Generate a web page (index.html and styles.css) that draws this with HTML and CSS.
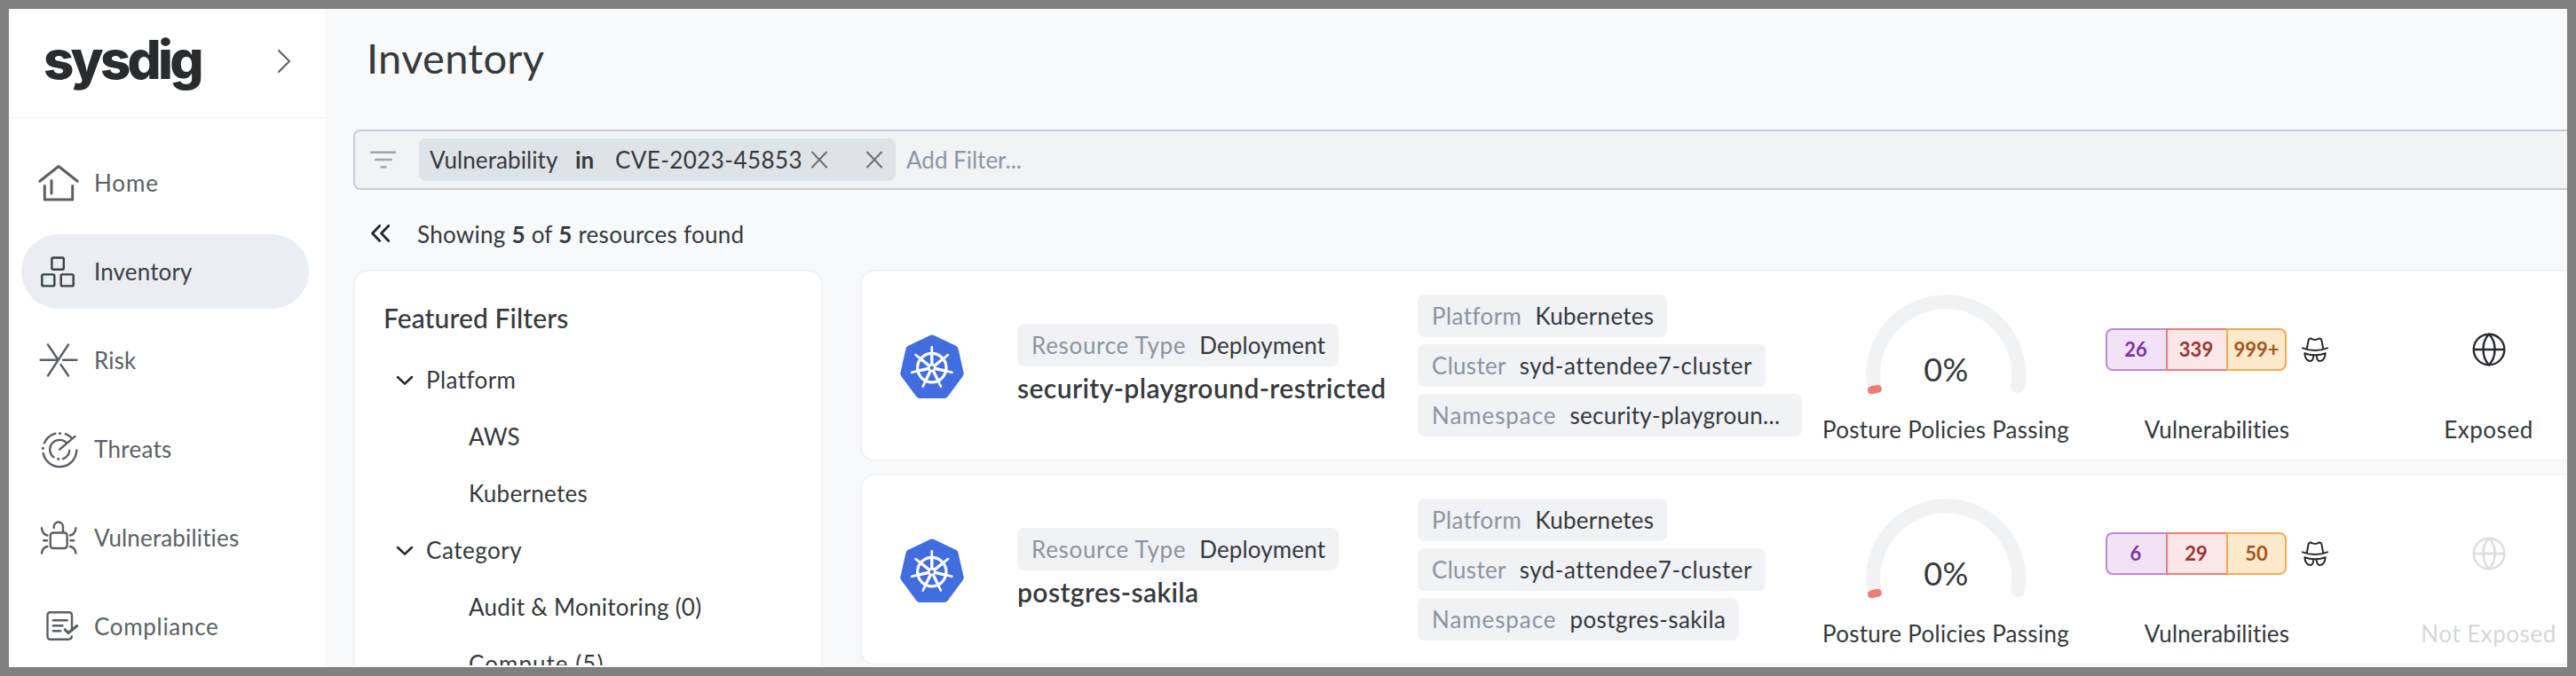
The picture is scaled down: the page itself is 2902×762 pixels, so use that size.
FILE: index.html
```html
<!DOCTYPE html>
<html lang="en">
<head>
<meta charset="utf-8">
<title>Inventory</title>
<link rel="stylesheet" href="styles.css">
</head>
<body>
<svg class="defs" width="0" height="0" aria-hidden="true">
  <symbol id="k8s" viewBox="0 0 72 72">
    <path d="M36 5.5 11.4 17.2 5.3 44 22.3 67H49.7L66.7 44 60.6 17.2Z" fill="#416ddf" stroke="#416ddf" stroke-width="10" stroke-linejoin="round"/>
    <g transform="translate(35.8 37.6)" stroke="#fff" stroke-width="2.7" stroke-linecap="round" fill="none">
      <circle r="16.2" stroke-width="3.2"/>
      <g id="spoke"><path d="M0-15V-23.2"/><path d="M0-4V-15" stroke-width="3.4"/></g>
      <use href="#spoke" transform="rotate(51.43)"/>
      <use href="#spoke" transform="rotate(102.86)"/>
      <use href="#spoke" transform="rotate(154.29)"/>
      <use href="#spoke" transform="rotate(205.71)"/>
      <use href="#spoke" transform="rotate(257.14)"/>
      <use href="#spoke" transform="rotate(308.57)"/>
      <circle r="4.6" fill="#fff" stroke="none"/>
      <circle r="2.2" fill="#416ddf" stroke="none"/>
    </g>
  </symbol>
  <symbol id="gauge" viewBox="0 0 276 135">
    <path d="M57.2 103A82 82 0 1 1 219.2 103" fill="none" stroke="#f1f2f4" stroke-width="16"/>
    <circle cx="219.1" cy="103" r="8" fill="#f1f2f4"/>
    <rect x="49.9" y="102.5" width="16" height="9" rx="4.2" fill="#ee7d78" transform="rotate(-12 57.9 107)"/>
  </symbol>
  <symbol id="spy" viewBox="0 0 30 28">
    <g fill="none" stroke="#26292d" stroke-width="2" stroke-linecap="round" stroke-linejoin="round">
      <path d="M1 12.4Q15 17.6 29 12.4"/>
      <path d="M5.8 13 7.6 3.6Q8.2 1.3 10 1.5L13 2.6Q15 3.2 17 2.6L20 1.5Q21.8 1.3 22.4 3.6L24.2 13"/>
      <path d="M3.3 18.2Q9 20.2 13.2 20.2Q13.4 26.8 9.4 26.9Q4 26.9 3.3 18.2Z"/>
      <path d="M26.7 18.2Q21 20.2 16.8 20.2Q16.6 26.8 20.6 26.9Q26 26.9 26.7 18.2Z"/>
      <path d="M13 20.2H17"/>
    </g>
  </symbol>
  <symbol id="globe" viewBox="0 0 38 38">
    <g fill="none" stroke="currentColor" stroke-width="2.4" stroke-linejoin="round">
      <circle cx="19" cy="19" r="17.3"/>
      <path d="M1.7 19H36.3M19 1.7C10.3 10.5 10.3 27.5 19 36.3C27.7 27.5 27.7 10.5 19 1.7Z"/>
    </g>
  </symbol>
  <symbol id="chevron" viewBox="0 0 20 12">
    <path d="M2 2 10 9.6 18 2" fill="none" stroke="#222529" stroke-width="2.5" stroke-linecap="round" stroke-linejoin="round"/>
  </symbol>
  <symbol id="cross" viewBox="0 0 18 20">
    <path d="M1 1.5 17 18.5M17 1.5 1 18.5" stroke="#6b7079" stroke-width="2" stroke-linecap="round"/>
  </symbol>
</svg>

<div class="app">
  <aside class="sidebar">
    <header class="brand">
      <span class="logo">sysdig</span>
      <svg class="expand" viewBox="0 0 14 28"><path d="M1 2 13 14 1 26" fill="none" stroke="#5b5f66" stroke-width="2" stroke-linecap="round" stroke-linejoin="round"/></svg>
    </header>
    <nav class="nav">
      <a class="nav-item">
        <svg viewBox="0 0 56 56" stroke-width="3"><path d="M4.8 26.3 26 9.5 47.3 26.3M10.3 31.5V47H41.7V31.5M18 25.5V40"/></svg>
        <span class="ls-9">Home</span>
      </a>
      <a class="nav-item active">
        <svg viewBox="0 0 56 56" stroke-width="2.4"><rect x="18.4" y="12.5" width="13.4" height="13.2" rx="1.5"/><rect x="7.3" y="31.4" width="14" height="13" rx="1.5"/><rect x="28.7" y="31.4" width="14" height="13" rx="1.5"/></svg>
        <span class="ls-1">Inventory</span>
      </a>
      <a class="nav-item">
        <svg viewBox="0 0 56 56" stroke-width="2.4"><path d="M5.7 27.7H25.5M31 27.7H46.5M37 10.5 14 45.5M14 10.5 25.5 27.5M28.5 33 37 45.5"/></svg>
        <span class="ls-1">Risk</span>
      </a>
      <a class="nav-item">
        <svg viewBox="0 0 56 56" stroke-width="2.4"><path d="M46.3 29.5A19 19 0 0 1 8.7 33M9.8 21.6A19 19 0 0 1 22.4 10.6M33.8 11.1A19 19 0 0 1 41.2 16M44.5 13.9 27.2 28.7M20.3 37.3A10.9 10.9 0 1 1 35.3 21.6M31 39.2A10.9 10.9 0 0 0 38.2 30"/><path d="M8.3 27.3h.01M27.5 10.5h.01M25.7 39.3h.01" stroke-width="3.2"/></svg>
        <span class="ls-3">Threats</span>
      </a>
      <a class="nav-item">
        <svg viewBox="0 0 56 56" stroke-width="2.4"><rect x="16.8" y="22.5" width="18.8" height="17.5" rx="3"/><path d="M20.7 17V15.7A5.15 5.15 0 0 1 31 15.7V22M7 17.3C7.5 21.5 10 24.8 13.4 25.5M45.4 17.3C44.9 21.5 42.4 24.8 39 25.5M9.2 31.3H13M39.4 31.3H43.2M13.4 38C10 38.7 7.5 41.5 7 45.5M39 38C42.4 38.7 44.9 41.5 45.4 45.5"/></svg>
        <span class="ls-1">Vulnerabilities</span>
      </a>
      <a class="nav-item">
        <svg viewBox="0 0 56 56" stroke-width="2.4"><path d="M41 30V15.3A3 3 0 0 0 38 12.3H16.5A3 3 0 0 0 13.5 15.3V39.7A3 3 0 0 0 16.5 42.7H37Q40.5 42.7 40.8 39.5M19.8 21.3H35.7M19.8 27.3H30.5M19.8 33.3H28.3"/><path d="M33.2 31.8 37 35.4 46.7 27.6" stroke-width="3.2"/></svg>
        <span class="ls-7">Compliance</span>
      </a>
    </nav>
  </aside>

  <main class="main">
    <h1 class="title">Inventory</h1>
    <div class="search">
      <svg class="filter-icon" viewBox="0 0 32 22"><path d="M2.200 2.700H29M7.200 11H24.800M13.500 19.300H18.500" stroke="#a2a5a9" stroke-width="2.400" stroke-linecap="round"/></svg>
      <div class="query">
        <span class="q-field">Vulnerability</span>
        <span class="q-op">in</span>
        <span class="q-value">CVE-2023-45853</span>
        <svg class="cross"><use href="#cross"/></svg>
        <svg class="cross clear"><use href="#cross"/></svg>
      </div>
      <span class="placeholder">Add Filter...</span>
    </div>
    <div class="summary">
      <svg class="collapse" viewBox="0 0 24 24"><path d="M11.7 3.500 3.600 12 11.700 20.500M21.700 3.500 13.600 12 21.700 20.500" fill="none" stroke="#222529" stroke-width="2.700" stroke-linecap="round" stroke-linejoin="round"/></svg>
      <span>Showing <b>5</b> of <b>5</b> resources found</span>
    </div>
    <div class="content">
      <section class="filters">
        <h2 class="filters-title">Featured Filters</h2>
        <div class="group"><svg class="chevron"><use href="#chevron"/></svg><span class="ls-4">Platform</span></div>
        <div class="option ls-1">AWS</div>
        <div class="option ls-3">Kubernetes</div>
        <div class="group"><svg class="chevron"><use href="#chevron"/></svg><span class="ls-5">Category</span></div>
        <div class="option ls-3">Audit &amp; Monitoring (0)</div>
        <div class="option ls-10">Compute (5)</div>
      </section>

      <section class="list">
        <article class="card">
          <svg class="k8s"><use href="#k8s"/></svg>
          <div class="identity">
            <div class="tag"><span class="key ls-7">Resource Type</span><span class="ls-1">Deployment</span></div>
            <div class="name">security-playground-restricted</div>
          </div>
          <div class="tags">
            <div class="tag"><span class="key ls-4">Platform</span><span class="ls-3">Kubernetes</span></div>
            <div class="tag"><span class="key ls-3">Cluster</span><span class="ls-5">syd-attendee7-cluster</span></div>
            <div class="tag wide"><span class="key ls-9">Namespace</span><span class="ls-3">security-playgroun...</span></div>
          </div>
          <div class="metric posture">
            <svg class="gauge" viewBox="0 0 276 135"><use href="#gauge"/><text x="138.5" y="98" class="gauge-text">0%</text></svg>
            <div class="label ls-3">Posture Policies Passing</div>
          </div>
          <div class="metric vulns">
            <div class="severity">
              <span class="sev critical">26</span><span class="sev high">339</span><span class="sev medium">999+</span>
              <svg class="spy"><use href="#spy"/></svg>
            </div>
            <div class="label ls-1">Vulnerabilities</div>
          </div>
          <div class="metric exposure">
            <svg class="globe"><use href="#globe"/></svg>
            <div class="label ls-5">Exposed</div>
          </div>
        </article>

        <article class="card">
          <svg class="k8s"><use href="#k8s"/></svg>
          <div class="identity">
            <div class="tag"><span class="key ls-7">Resource Type</span><span class="ls-1">Deployment</span></div>
            <div class="name">postgres-sakila</div>
          </div>
          <div class="tags">
            <div class="tag"><span class="key ls-4">Platform</span><span class="ls-3">Kubernetes</span></div>
            <div class="tag"><span class="key ls-3">Cluster</span><span class="ls-5">syd-attendee7-cluster</span></div>
            <div class="tag"><span class="key ls-9">Namespace</span><span class="ls-4">postgres-sakila</span></div>
          </div>
          <div class="metric posture">
            <svg class="gauge" viewBox="0 0 276 135"><use href="#gauge"/><text x="138.5" y="98" class="gauge-text">0%</text></svg>
            <div class="label ls-3">Posture Policies Passing</div>
          </div>
          <div class="metric vulns">
            <div class="severity">
              <span class="sev critical">6</span><span class="sev high">29</span><span class="sev medium">50</span>
              <svg class="spy"><use href="#spy"/></svg>
            </div>
            <div class="label ls-1">Vulnerabilities</div>
          </div>
          <div class="metric exposure off">
            <svg class="globe"><use href="#globe"/></svg>
            <div class="label ls-5">Not Exposed</div>
          </div>
        </article>
      </section>
    </div>
  </main>
</div>
</body>
</html>
```
FILE: styles.css
```css
* { box-sizing: border-box; }

body {
  margin: 0;
  padding: 10px;
  height: 762px;
  overflow: hidden;
  background: #808080;
  color: #36393d;
  font-family: Lato, "Open Sans", sans-serif;
  font-size: 26px;
}

svg { display: block; flex: none; }
.defs { position: absolute; }

.ls-1 { letter-spacing: 0.15px; }
.ls-3 { letter-spacing: 0.28px; }
.ls-4 { letter-spacing: 0.42px; }
.ls-5 { letter-spacing: 0.52px; }
.ls-7 { letter-spacing: 0.69px; }
.ls-9 { letter-spacing: 0.92px; }
.ls-10 { letter-spacing: 1.05px; }

.app {
  display: flex;
  width: 2882px;
  height: 742px;
  overflow: hidden;
  background: #f8f9fb;
}

/* Sidebar */
.sidebar { flex: none; width: 356px; background: #fff; }
.brand {
  display: flex;
  align-items: center;
  justify-content: space-between;
  height: 124px;
  padding: 0 39px 9px 39px;
  border-bottom: 2px solid #f8f9fa;
}
.logo {
  color: #282c2f;
  font: 800 60px/72px Inter, sans-serif;
  letter-spacing: -3.8px;
}
.expand { width: 14px; height: 28px; margin-top: 4px; }
.nav {
  display: flex;
  flex-direction: column;
  gap: 16px;
  padding: 30px 18px 0 14px;
}
.nav-item {
  display: flex;
  align-items: center;
  gap: 10px;
  flex: none;
  height: 84px;
  padding-left: 16px;
  border-radius: 42px;
  color: #5b5f65;
}
.nav-item svg {
  width: 56px;
  height: 56px;
  fill: none;
  stroke: currentColor;
  stroke-linecap: round;
  stroke-linejoin: round;
}
.nav-item.active { background: #eaedf2; color: #3c4045; }

/* Main column */
.main { flex: 1; min-width: 0; padding-left: 32px; }
.title {
  margin: 0;
  height: 136px;
  padding-left: 15px;
  font-size: 47px;
  font-weight: 400;
  line-height: 110px;
  letter-spacing: 0.3px;
}
.search {
  display: flex;
  align-items: center;
  height: 68px;
  padding-left: 16px;
  border: 2px solid #c6cdd6;
  border-right: 0;
  border-radius: 8px 0 0 8px;
  background: #f1f3f5;
}
.filter-icon { width: 32px; height: 22px; margin-right: 24px; }
.query {
  display: flex;
  align-items: center;
  width: 537px;
  height: 48px;
  padding-left: 12px;
  border-radius: 8px;
  background: #dee3e7;
  white-space: nowrap;
}
.q-field { width: 164px; letter-spacing: 0.1px; }
.q-op { width: 45px; font-weight: 700; }
.q-value { width: 221px; letter-spacing: 0.42px; }
.cross { width: 18px; height: 20px; }
.clear { margin-left: 44px; }
.placeholder { margin-left: 12px; color: #8f969f; }
.summary {
  display: flex;
  align-items: center;
  gap: 30px;
  height: 90px;
  padding: 9px 0 0 18px;
  letter-spacing: 0.26px;
}
.collapse { width: 24px; height: 24px; margin-top: -2px; }
.content { display: flex; align-items: flex-start; gap: 42px; }

/* Featured filters */
.filters {
  flex: none;
  width: 529px;
  height: 446px;
  overflow: hidden;
  border: 2px solid #f1f2f5;
  border-bottom: 0;
  border-radius: 16px 16px 0 0;
  background: #fff;
}
.filters-title {
  margin: 0;
  height: 90px;
  padding: 14px 0 0 32px;
  font-size: 30px;
  font-weight: 500;
  line-height: 76px;
  letter-spacing: 0.1px;
}
.group, .option { height: 64px; line-height: 65px; }
.group { display: flex; align-items: center; gap: 14px; padding-left: 46px; }
.chevron { width: 20px; height: 12px; margin-top: 2px; }
.option { padding-left: 128px; }

/* Resource list */
.list { display: flex; flex: 1; flex-direction: column; gap: 14px; min-width: 0; }
.card {
  display: grid;
  grid-template-columns: 175px 451px 457px 276px 335px 227px;
  align-items: start;
  height: 216px;
  border: 2px solid #f1f2f5;
  border-right: 0;
  border-radius: 16px 0 0 16px;
  background: #fff;
}
.k8s { width: 72px; height: 72px; margin: 71px 0 0 43px; }
.identity { padding-top: 59px; }
.tags { display: grid; gap: 8px; justify-items: start; padding-top: 26px; }
.tag {
  display: flex;
  gap: 15px;
  width: max-content;
  height: 48px;
  padding: 0 15px 0 16px;
  border-radius: 8px;
  background: #f1f2f5;
  line-height: 48px;
  white-space: nowrap;
}
.tag.wide { width: 433px; }
.key { color: #8d949d; }
.name {
  margin-top: 3px;
  font-size: 30px;
  font-weight: 600;
  line-height: 42px;
  letter-spacing: 0.42px;
}
.metric { display: flex; flex-direction: column; align-items: center; }
.label { line-height: 34px; white-space: nowrap; }
.posture { padding-top: 26px; }
.gauge { width: 276px; height: 135px; }
.gauge-text { fill: #36393d; font-size: 36px; letter-spacing: 0.5px; text-anchor: middle; }
.vulns { gap: 49px; padding-top: 64px; }
.severity { display: flex; align-items: center; }
.sev {
  width: 68px;
  height: 48px;
  border: 2px solid;
  border-right: 0;
  font-size: 22px;
  font-weight: 700;
  line-height: 44px;
  text-align: center;
}
.critical { border-color: #c088d8; border-radius: 8px 0 0 8px; background: #f0e3f8; color: #80329f; }
.high { border-color: #ee7d78; background: #fbe6e8; color: #993430; }
.medium { border: 2px solid #f4ab52; border-radius: 0 8px 8px 0; background: #fdeacc; color: #a2561d; }
.critical, .high { padding-right: 2px; }
.spy { width: 30px; height: 28px; margin-left: 17px; }
.exposure { gap: 54px; padding: 69px 0 0 50px; }
.globe { width: 38px; height: 38px; color: #26292d; }
.exposure.off { color: #d6d7d9; }
.off .globe { color: #dbdcdd; }
```
